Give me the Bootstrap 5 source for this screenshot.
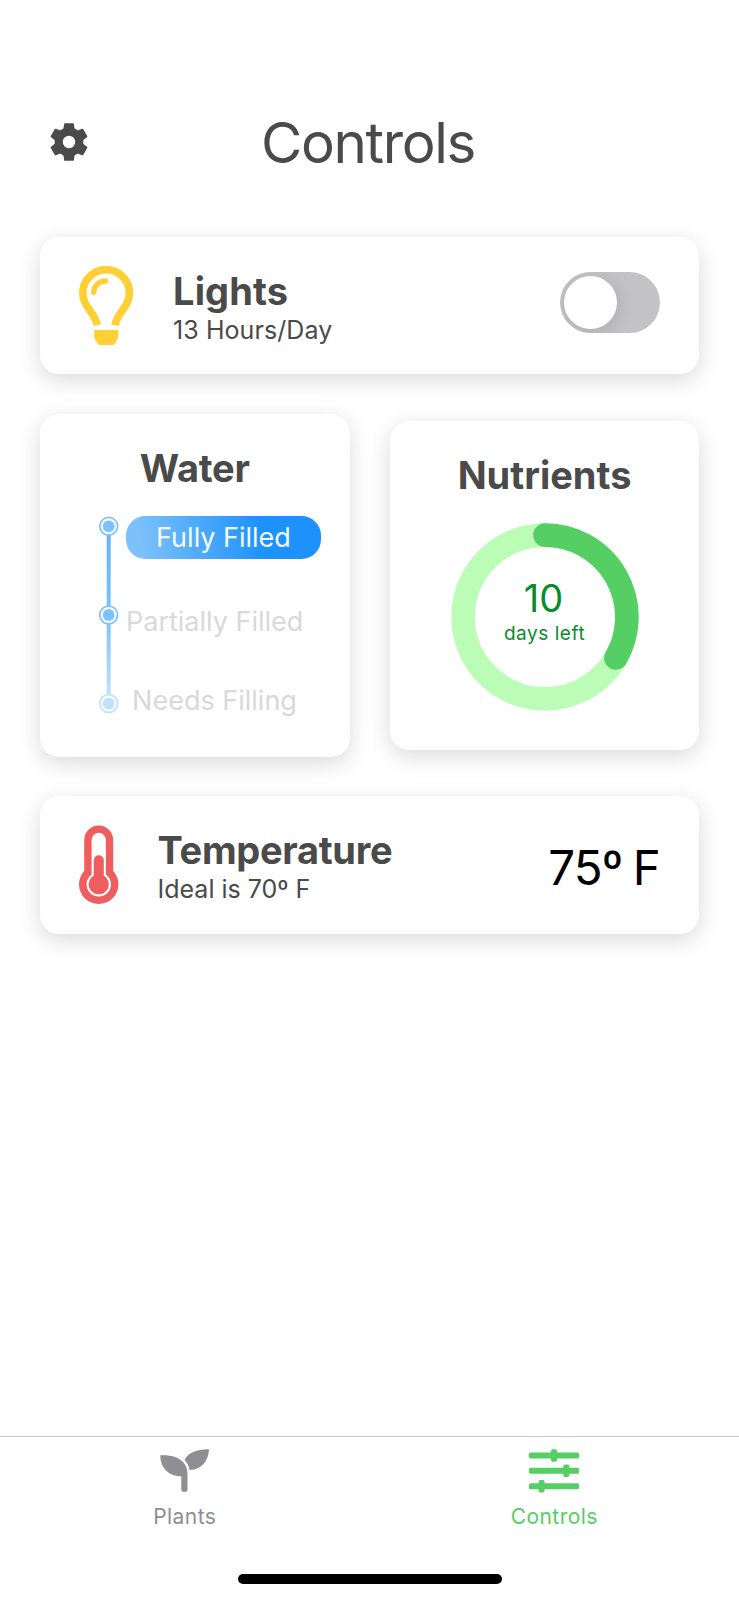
<!DOCTYPE html>
<html lang="en">
<head>
<meta charset="utf-8">
<meta name="viewport" content="width=device-width, initial-scale=1">
<title>Controls</title>
<link rel="stylesheet" href="https://cdn.jsdelivr.net/npm/bootstrap@5.3.0/dist/css/bootstrap.min.css">
<style>
  body { font-family: Inter, "Liberation Sans", sans-serif; color: #4a4a4a; background: #fff; }
  svg { display: block; flex: none; }
  .screen { height: 1600px; overflow: hidden; }
  .top-bar { height: 236.5px; padding: 111px 53px 0 50px; display: grid; grid-template-columns: 60px 1fr 60px; }
  .page-title { font-size: 56.5px; line-height: 64px; font-weight: 400; letter-spacing: -1.35px; }
  .panel { --bs-card-border-width: 0; --bs-card-border-radius: 19px; box-shadow: 0 6px 22px rgba(0,0,0,.15); }
  .panel-wide { height: 137.5px; padding: 29px 39.5px 0 39px; }
  .panel-title { font-size: 38px; line-height: 44px; font-weight: 700; letter-spacing: 0; }
  .panel-sub { font-size: 25px; line-height: 34px; }
  .copy { margin-top: 3px; }
  .stack { padding: 0 39.6px 0 40px; }
  .pair { gap: 40px; margin: 40px 0 39.5px; height: 342.5px; }
  .pair .panel { flex: 1 1 0; }
  .water { height: 342.5px; padding-top: 31.7px; }
  .nutrients { height: 329px; padding-top: 32.2px; }
  .toggle { width: 100px; height: 61px; padding: 4px; margin-top: 6.3px; border-radius: 31px; background: #c3c3c5; overflow: hidden; }
  .knob { width: 53px; height: 53px; box-shadow: 2px 3px 16px rgba(0,0,0,.12); }
  .levels { margin: 26px 0 0 59px; gap: 7px; }
  .level { font-size: 27px; line-height: 36px; color: #d9d9d9; }
  .level-on { width: 195px; height: 43.5px; padding-top: 4px; border-radius: 19.5px; color: #f4faff; background: linear-gradient(80deg, #7cc1fb 8%, #1e92fc 69%); }
  .level-off { width: 177px; }
  .ring { width: 188px; height: 188px; margin-top: 26px; }
  .ring-text { inset: 0; padding-top: 53px; color: #078c2c; }
  .reading { font-size: 47.5px; line-height: 56px; color: #000; margin-top: 14.5px; letter-spacing: -.9px; word-spacing: -2px; }
  .tab-bar { height: 164.5px; border-top: 1.5px solid #c6c6c6; }
  .tab { flex: 1 1 0; padding-top: 12.3px; font-size: 21px; line-height: 28px; letter-spacing: .45px; color: #8e8e93; }
  .tab.on { color: #55ce63; }
  .tab span { margin-top: 10.2px; }
  .home-line { width: 264px; height: 10px; border-radius: 5px; background: #000; margin-bottom: 16px; }
</style>
</head>
<body>
<div class="screen d-flex flex-column">
  <header class="top-bar">
    <svg width="38" height="38" viewBox="-19 -19 38 38" style="margin-top:12px" fill="#4a4a4a" stroke="#4a4a4a" stroke-linejoin="round">
      <circle r="14.4" stroke="none"/>
      <g stroke-width="2">
        <path d="M-3.900-17.800h7.800l.8 6v23.600l-.8 6h-7.800l-.8-6v-23.600z"/>
        <path transform="rotate(60)" d="M-3.900-17.800h7.800l.8 6v23.600l-.8 6h-7.800l-.8-6v-23.600z"/>
        <path transform="rotate(120)" d="M-3.900-17.800h7.800l.8 6v23.600l-.8 6h-7.800l-.8-6v-23.600z"/>
      </g>
      <circle r="6.200" fill="#fff" stroke="none"/>
    </svg>
    <h1 class="page-title text-center text-nowrap m-0">Controls</h1>
  </header>

  <main class="stack flex-grow-1">
    <section class="card panel panel-wide flex-row align-items-start">
      <svg width="55" height="80" viewBox="0 0 55 80" fill="none" stroke="#ffd035">
        <path stroke-width="7.600" d="M18.300 59.200C15.500 45.500 3.800 41 3.800 27A23.300 23.300 0 0 1 50.400 27C50.400 41 38.700 45.500 35.900 59.200"/>
        <path stroke-width="5.400" stroke-linecap="round" d="M14.700 26.300C14.700 20 20 15 26.600 15"/>
        <path stroke="none" fill="#ffd035" d="M15.200 64h24v8l-3.700 6q-.7 1-2 1H20.900q-1.300 0-2-1l-3.700-6z"/>
      </svg>
      <div class="copy" style="margin-left:39px">
        <div class="panel-title" style="letter-spacing:.15px">Lights</div>
        <div class="panel-sub" style="letter-spacing:.08px">13 Hours/Day</div>
      </div>
      <div class="toggle ms-auto" role="switch" aria-checked="false"><div class="knob bg-white rounded-circle"></div></div>
    </section>

    <div class="pair d-flex align-items-center">
      <section class="card panel water">
        <div class="panel-title text-center" style="letter-spacing:-.2px">Water</div>
        <div class="levels d-flex">
          <svg width="20" height="198" viewBox="0 0 20 198">
            <defs><linearGradient id="rail" x1="0" y1="0" x2="0" y2="1"><stop offset="0" stop-color="#68b2f9"/><stop offset=".5" stop-color="#7dc2ff"/><stop offset="1" stop-color="#bfe0ff"/></linearGradient></defs>
            <rect x="7.700" y="19" width="4" height="160" fill="url(#rail)"/>
            <g fill="#fff" stroke="#7dc2fd" stroke-width="1.700">
              <circle cx="9.700" cy="10.300" r="8.900"/><circle cx="9.700" cy="99" r="8.900"/><circle cx="9.700" cy="187.500" r="8.900" stroke="#bfe0ff"/>
            </g>
            <g fill="#7dc2fd"><circle cx="9.700" cy="10.300" r="5.900"/><circle cx="9.700" cy="99" r="5.900"/><circle cx="9.700" cy="187.500" r="5.900" fill="#bfe0ff"/></g>
          </svg>
          <div>
            <div class="level level-on text-center">Fully Filled</div>
            <div class="level level-off text-center text-nowrap" style="margin-top:44.500px">Partially Filled</div>
            <div class="level level-off text-center text-nowrap" style="margin-top:43px">Needs Filling</div>
          </div>
        </div>
      </section>

      <section class="card panel nutrients">
        <div class="panel-title text-center">Nutrients</div>
        <div class="ring mx-auto position-relative">
          <svg width="188" height="188" viewBox="-94 -94 188 188" fill="none" stroke-width="23.600">
            <circle r="81.900" stroke="#bbfdb7"/>
            <path stroke="#55ce63" stroke-linecap="round" d="M0-81.900A81.900 81.900 0 0 1 70.900 40.950"/>
          </svg>
          <div class="ring-text position-absolute text-center">
            <div style="font-size:38px;line-height:44px;padding-right:2px">10</div>
            <div style="font-size:19px;line-height:27px;letter-spacing:.55px">days left</div>
          </div>
        </div>
      </section>
    </div>

    <section class="card panel panel-wide flex-row align-items-start">
      <svg width="40" height="80" viewBox="0 0 40 80" fill="#f05d5e">
        <path d="M5.200 14.900a14.500 14.500 0 0 1 29 0V46a19.700 19.700 0 1 1-29 0z"/>
        <path fill="#fff" d="M12.600 15a7.150 7.150 0 0 1 14.300 0V49.500a12.200 12.200 0 1 1-14.300 0z"/>
        <path d="M14.700 35.200a5.050 5.050 0 0 1 10.100 0V50.700a10 10 0 1 1-10.100 0z"/>
      </svg>
      <div class="copy" style="margin-left:38.500px">
        <div class="panel-title" style="letter-spacing:-.3px">Temperature</div>
        <div class="panel-sub">Ideal is 70º F</div>
      </div>
      <div class="reading ms-auto text-nowrap">75º F</div>
    </section>
  </main>

  <nav class="tab-bar d-flex flex-column">
    <div class="d-flex flex-grow-1">
      <div class="tab d-flex flex-column align-items-center">
        <svg width="50" height="44" viewBox="0 0 50 44" fill="currentColor">
          <path d="M.3 6.300C9 5.500 17 7.500 22 12c4 3.800 5.500 8 5.500 13.500V41q0 1.700-1.700 1.700h-2.800q-1.700 0-1.700-1.700V27.300C9 27.500.3 19 .3 6.300z"/>
          <path d="M49 .3C40 .3 29.500 2 24.500 10.700c2.600 2.900 4.300 6.500 5.200 10.400C42 20.500 48.500 12 49 .3z"/>
        </svg>
        <span>Plants</span>
      </div>
      <div class="tab on d-flex flex-column align-items-center">
        <svg width="50" height="44" viewBox="0 0 50 44" fill="currentColor">
          <rect y="3.500" width="50" height="6" rx="1.500"/><rect y="18.800" width="50" height="6" rx="1.500"/><rect y="34.200" width="50" height="6" rx="1.500"/>
          <rect x="22" y=".2" width="6" height="12.500" rx="1.800"/><rect x="34.300" y="15.500" width="6" height="12.500" rx="1.800"/><rect x="9.600" y="30.900" width="6" height="12.500" rx="1.800"/>
        </svg>
        <span>Controls</span>
      </div>
    </div>
    <div class="home-line mx-auto"></div>
  </nav>
</div>
<script src="https://cdn.jsdelivr.net/npm/bootstrap@5.3.0/dist/js/bootstrap.bundle.min.js"></script>
</body>
</html>
